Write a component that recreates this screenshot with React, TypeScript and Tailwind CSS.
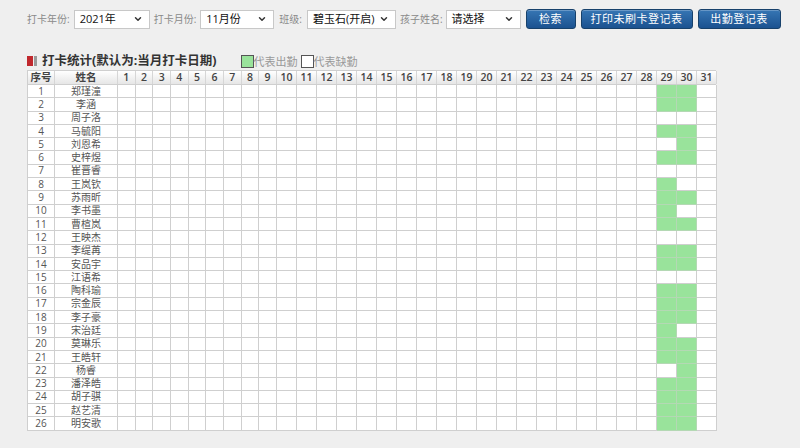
import React from "react";
import { ChevronDown } from "lucide-react";

const FONT = '"Open Sans", "Noto Sans CJK SC", sans-serif';

const NAMES = [
  "郑瑾潼", "李涵", "周子洛", "马毓阳", "刘恩希", "史梓煜", "崔晋睿", "王岚钦", "苏雨昕",
  "李书墨", "曹楦岚", "王映杰", "李缇苒", "安品宇", "江语希", "陶科瑜", "宗金辰", "李子豪",
  "宋治廷", "莫琳乐", "王皓轩", "杨睿", "潘泽皓", "胡子骐", "赵艺清", "明安歌",
];

// attendance on day 29 / day 30, per row
const ATT: [boolean, boolean][] = [
  [true, true], [true, true], [false, false], [true, true], [false, true], [true, true],
  [false, false], [true, false], [true, true], [true, false], [true, true], [false, false],
  [true, true], [true, true], [false, false], [true, true], [true, true], [true, true],
  [true, false], [true, true], [true, true], [false, true], [true, true], [true, true],
  [true, true], [true, true],
];

const DAYS = Array.from({ length: 31 }, (_, i) => i + 1);

const dayWidth = (d: number) => (d < 10 ? "w-[17.67px]" : "w-[20px]");

function FakeSelect({ value, width }: { value: string; width: string }) {
  return (
    <div
      className={`${width} h-[19px] bg-white border border-[#c8c8c8] flex items-center justify-between pl-[5px] pr-[6px] text-[11px] text-[#111]`}
    >
      <span>{value}</span>
      <ChevronDown className="w-[10px] h-[10px] text-[#333]" strokeWidth={3.5} />
    </div>
  );
}

function Btn({ label, width }: { label: string; width: string }) {
  return (
    <div
      className={`${width} h-[20px] rounded-[3px] border border-[#17416b] bg-gradient-to-b from-[#3676b4] to-[#1b5290] flex items-center justify-center text-[11px] text-white tracking-[0.5px] shadow-[inset_0_1px_0_rgba(255,255,255,0.25)]`}
    >
      {label}
    </div>
  );
}

export default function App() {
  return (
    <div
      className="w-[800px] h-[448px] bg-[#efefef] overflow-hidden"
      style={{ fontFamily: FONT }}
    >
      {/* Toolbar */}
      <div className="flex items-center pt-[9px] pl-[27px]">
        <span className="text-[10px] text-[#8a8a8a] mr-[4px]">打卡年份:</span>
        <FakeSelect value="2021年" width="w-[76px]" />
        <span className="text-[10px] text-[#8a8a8a] ml-[4px] mr-[4px]">打卡月份:</span>
        <FakeSelect value="11月份" width="w-[74px]" />
        <span className="text-[10px] text-[#8a8a8a] ml-[5px] mr-[5px]">班级:</span>
        <FakeSelect value="碧玉石(开启)" width="w-[89px]" />
        <span className="text-[10px] text-[#8a8a8a] ml-[4px] mr-[3px]">孩子姓名:</span>
        <FakeSelect value="请选择" width="w-[75px]" />
        <div className="flex items-center gap-[5px] ml-[5px]">
          <Btn label="检索" width="w-[50px]" />
          <Btn label="打印未刷卡登记表" width="w-[112px]" />
          <Btn label="出勤登记表" width="w-[83px]" />
        </div>
      </div>

      {/* Title + legend */}
      <div className="flex items-end pl-[27px] mt-[25px] h-[14px]">
        <div className="flex items-center h-[14px]">
          <div className="w-[6px] h-[10px] bg-[#c0282d]" />
          <div className="w-[3px] h-[10px] bg-[#9a9a9a] ml-[1px]" />
        </div>
        <span className="ml-[5px] text-[12.5px] font-bold text-[#333] leading-[14px]">
          打卡统计(默认为:当月打卡日期)
        </span>
        <div className="ml-[24px] flex items-end">
          <div className="w-[13px] h-[13px] bg-[#99e39b] border border-[#555]" />
          <span className="text-[11px] text-[#999] leading-[12px]">代表出勤</span>
          <div className="ml-[3px] w-[13px] h-[13px] bg-white border border-[#555]" />
          <span className="text-[11px] text-[#999] leading-[12px]">代表缺勤</span>
        </div>
      </div>

      {/* Table */}
      <div className="ml-[27px] mt-[2px] w-[689px] border-l border-t border-[#cfcfcf]">
        <div className="flex h-[14px] bg-gradient-to-b from-white to-[#e6e6e6] border-b border-[#cfcfcf] text-[10.5px] text-[#444] font-semibold">
          <div className="w-[27px] border-r border-[#d6d6d6] flex items-center justify-center shrink-0">
            序号
          </div>
          <div className="w-[63px] border-r border-[#d6d6d6] flex items-center justify-center shrink-0">
            姓名
          </div>
          {DAYS.map((d) => (
            <div
              key={d}
              className={`${dayWidth(d)} border-r border-[#d6d6d6] flex items-center justify-center shrink-0`}
            >
              {d}
            </div>
          ))}
        </div>
        {NAMES.map((name, i) => (
          <div key={name} className="flex h-[13.3px] bg-white text-[10px] text-[#555]">
            <div className="w-[27px] border-r border-b border-[#cfcfcf] flex items-center justify-center shrink-0">
              {i + 1}
            </div>
            <div className="w-[63px] border-r border-b border-[#cfcfcf] flex items-center justify-center shrink-0">
              {name}
            </div>
            {DAYS.map((d) => {
              const present =
                (d === 29 && ATT[i][0]) || (d === 30 && ATT[i][1]);
              return (
                <div
                  key={d}
                  className={`${dayWidth(d)} border-r border-b shrink-0 ${
                    present ? "bg-[#99e39b] border-[#b4d8b4]" : "border-[#cfcfcf]"
                  }`}
                />
              );
            })}
          </div>
        ))}
      </div>
    </div>
  );
}
